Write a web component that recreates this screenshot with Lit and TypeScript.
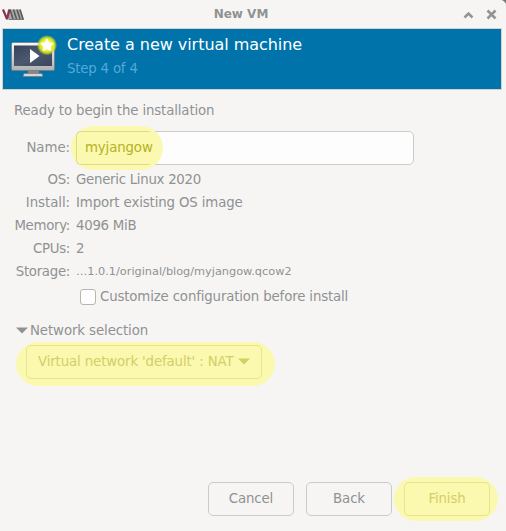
import { LitElement, html, css } from "lit";
import { customElement } from "lit/decorators.js";

const DETAILS: Array<[string, string, string]> = [
  ["OS:", "Generic Linux 2020", "tight"],
  ["Install:", "Import existing OS image", ""],
  ["Memory:", "4096 MiB", "tight"],
  ["CPUs:", "2", ""],
];

@customElement("app-root")
export class AppRoot extends LitElement {
  static styles = css`
    :host {
      display: block;
      width: 506px;
      height: 531px;
      overflow: hidden;
      background: #f6f5f4;
      color: #8f9292;
      font: 13.33px/23px "DejaVu Sans", sans-serif;
      letter-spacing: -0.13px;
    }
    * { box-sizing: border-box; }
    svg { display: block; }
    .window { position: relative; height: 531px; display: flex; flex-direction: column; }
    .corner { position: absolute; top: 0; right: 0; }
    .titlebar { height: 28px; display: grid; grid-template-columns: 60px 1fr 60px; align-items: center; flex: none; }
    .title { text-align: center; font-weight: bold; font-size: 12px; padding-right: 24px; letter-spacing: 0; }
    .banner {
      height: 62px; width: 500px; margin-left: 2px; flex: none;
      background: #0073aa; border: 1px solid #d3d1cd;
      display: flex; color: #fff;
    }
    .monitor { margin: 6px 0 0 7px; flex: none; width: 48px; }
    .heading { margin-left: 9px; padding-top: 3px; }
    .heading h1 { margin: 0; font-size: 16px; letter-spacing: -0.04px; font-weight: normal; line-height: 25px; white-space: nowrap; }
    .step { color: #55a8da; line-height: 23px; letter-spacing: -0.2px; }
    .intro { margin: 9px 0 0 14px; height: 24px; white-space: nowrap; }
    .details { display: grid; grid-template-columns: 70px 1fr; column-gap: 6px; margin-top: 8px; }
    .label { text-align: right; white-space: nowrap; letter-spacing: -0.3px; }
    .label.wide { letter-spacing: -0.05px; }
    .tight { letter-spacing: -0.28px; }
    .name-label { line-height: 34px; }
    .mark { position: relative; }
    .mark::before { content: ""; position: absolute; z-index: 0; background: #fbf8b0; }
    .field { width: 338px; height: 34px; margin-bottom: 3px; }
    .field::before { left: -5px; top: -5px; width: 92px; height: 44px; border-radius: 22px; z-index: 1; }
    .entry { height: 34px; border: 1px solid #cdcbc8; border-radius: 5px; background: #fdfdfd; }
    .entry-text {
      position: absolute; z-index: 2; left: 0; top: 0; width: 87px; height: 34px;
      border: 1px solid #dfd989; border-right: 0; border-radius: 5px 0 0 5px;
      padding-left: 8px; line-height: 31px; color: #b5b222;
      clip-path: inset(0 round 0 17px 17px 0);
    }
    .storage { font-size: 11.3px; letter-spacing: 0; }
    .customize { display: flex; align-items: center; height: 23px; margin: 2px 0 0 80px; gap: 4px; white-space: nowrap; letter-spacing: -0.15px; }
    .box { width: 16px; height: 16px; border: 1px solid #bcb5ad; border-radius: 3px; background: #fff; }
    .expander { display: flex; align-items: center; height: 23px; margin: 11px 0 0 16px; gap: 2px; letter-spacing: -0.1px; }
    .combo { width: 236px; height: 34px; margin: 3px 0 0 26px; }
    .combo::before { left: -10px; top: -3px; width: 259px; height: 44px; border-radius: 22px; }
    .button {
      position: relative; height: 34px; border: 1px solid #cdcbc8; border-radius: 5px;
      display: flex; align-items: center; justify-content: center; white-space: nowrap;
    }
    .tinted { border-color: #e8e38c; color: #d2cf66; }
    .combo .button { justify-content: flex-start; padding: 0 0 2px 11px; gap: 4px; }
    .actions { display: flex; gap: 12px; justify-content: flex-end; margin: auto 16px 15px 0; }
    .action { width: 86px; }
    .action::before { left: -10px; top: -5px; width: 104px; height: 44px; border-radius: 22px; }
    .action .button { padding-bottom: 1px; }
  `;

  private logo() {
    return html`<svg width="30" height="28" viewBox="0 0 30 28" fill="none" stroke-linejoin="bevel">
      <path d="M8 9.5h12.5l3.500 10H6z" fill="#aaa" />
      <path d="M10 9.5l3 9.500M13.500 9.500l3 9.500M17 9.500l3 9.500M20 9.500l3 9.500" stroke="#5a5a5a" stroke-width="1.600" />
      <path d="M9 19.500h15" stroke="#777" />
      <path d="M3 9.500l4 9.500 2.500-9.500" stroke="#84364c" stroke-width="2.200" />
    </svg>`;
  }

  private monitor() {
    return html`<svg width="48" height="46" viewBox="10 35 48 46">
      <defs>
        <linearGradient id="frame" x1="0" y1="0" x2="0" y2="1">
          <stop offset="0" stop-color="#fafafa" /><stop offset="1" stop-color="#b0b0b0" />
        </linearGradient>
        <linearGradient id="screen" x1="0" y1="0" x2="1" y2="1">
          <stop offset="0" stop-color="#364259" /><stop offset=".5" stop-color="#4b586e" /><stop offset="1" stop-color="#3a465c" />
        </linearGradient>
        <radialGradient id="glow">
          <stop offset="0" stop-color="#ffff70" /><stop offset=".6" stop-color="#e8f020" /><stop offset=".8" stop-color="#cde020" stop-opacity=".8" /><stop offset="1" stop-color="#a0cc30" stop-opacity="0" />
        </radialGradient>
      </defs>
      <path d="M28 70h11v4H28z" fill="#888" />
      <path d="M24 73.500h18l1 3H23z" fill="#d6d6d6" stroke="#777" stroke-width=".7" />
      <rect x="11.500" y="42.500" width="43" height="28" rx="1.500" fill="url(#frame)" stroke="#777c80" stroke-width=".8" />
      <rect x="14" y="45.500" width="38" height="20.500" fill="url(#screen)" />
      <path d="M30 49v14l9.500-7z" fill="#fff" />
      <circle cx="47" cy="45.200" r="10.200" fill="url(#glow)" />
      <path d="M47 39.200l1.800 3.700 4.200.5-3 2.900.7 4.200-3.700-2-3.700 2 .7-4.200-3-2.900 4.200-.5z" fill="#fff" stroke="#fff" stroke-width="1.200" stroke-linejoin="round" />
    </svg>`;
  }

  private arrow() {
    return html`<svg width="12" height="7" viewBox="0 0 12 7"><path d="M0 .5h12L6 6.5z" fill="currentColor" /></svg>`;
  }

  render() {
    return html`<div class="window">
      <svg class="corner" width="6" height="5" viewBox="0 0 6 5"><path d="M1.5 0H6v4.5Q5.5 1.5 1.5 0z" fill="#777" /></svg>
      <div class="titlebar">
        ${this.logo()}
        <div class="title">New VM</div>
        <svg width="60" height="28" viewBox="446 0 60 28" fill="none" stroke="#929595">
          <path d="M464.5 17.5l4-4 4 4" stroke-width="2.5" />
          <path d="M487.5 10.5l8 8M495.5 10.5l-8 8" stroke-width="2.6" />
        </svg>
      </div>
      <div class="banner">
        <div class="monitor">${this.monitor()}</div>
        <div class="heading"><h1>Create a new virtual machine</h1><div class="step">Step 4 of 4</div></div>
      </div>
      <div class="intro">Ready to begin the installation</div>
      <div class="details">
        <div class="label wide name-label">Name:</div>
        <div class="field mark"><div class="entry"></div><div class="entry-text">myjangow</div></div>
        ${DETAILS.map(([k, v, fit]) => html`<div class="label ${k === "Install:" ? "wide" : ""}">${k}</div><div class=${fit}>${v}</div>`)}
        <div class="label">Storage:</div><div class="storage">…1.0.1/original/blog/myjangow.qcow2</div>
      </div>
      <div class="customize"><span class="box"></span><span>Customize configuration before install</span></div>
      <div class="expander">${this.arrow()}<span>Network selection</span></div>
      <div class="combo mark"><div class="button tinted"><span>Virtual network 'default' : NAT</span>${this.arrow()}</div></div>
      <div class="actions">
        <div class="action"><div class="button">Cancel</div></div>
        <div class="action"><div class="button">Back</div></div>
        <div class="action mark"><div class="button tinted">Finish</div></div>
      </div>
    </div>`;
  }
}
